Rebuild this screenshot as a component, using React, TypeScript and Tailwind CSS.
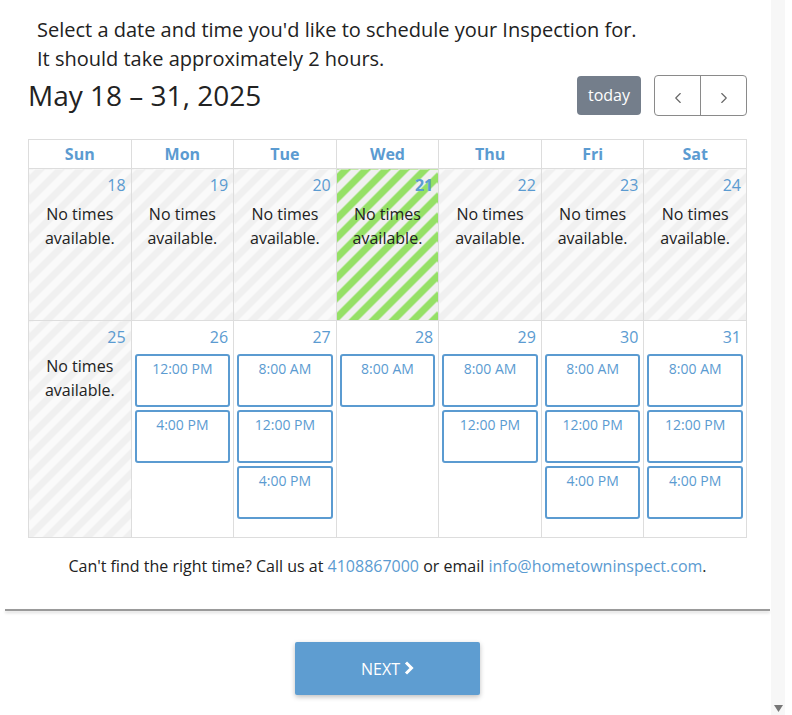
import { ChevronLeft, ChevronRight } from 'lucide-react'

type Day = { n: number; slots?: string[]; today?: boolean }

const days: string[] = ['Sun', 'Mon', 'Tue', 'Wed', 'Thu', 'Fri', 'Sat']

const weeks: Day[][] = [
  [{ n: 18 }, { n: 19 }, { n: 20 }, { n: 21, today: true }, { n: 22 }, { n: 23 }, { n: 24 }],
  [
    { n: 25 },
    { n: 26, slots: ['12:00 PM', '4:00 PM'] },
    { n: 27, slots: ['8:00 AM', '12:00 PM', '4:00 PM'] },
    { n: 28, slots: ['8:00 AM'] },
    { n: 29, slots: ['8:00 AM', '12:00 PM'] },
    { n: 30, slots: ['8:00 AM', '12:00 PM', '4:00 PM'] },
    { n: 31, slots: ['8:00 AM', '12:00 PM', '4:00 PM'] },
  ],
]

function DayCell({ day }: { day: Day }) {
  const striped = !day.slots
  let bg = 'bg-white'
  if (striped) bg = 'bg-[repeating-linear-gradient(-45deg,#f0f0f0_0,#f0f0f0_7px,#fafafa_7px,#fafafa_14px)]'
  if (day.today) bg = 'bg-[repeating-linear-gradient(-45deg,#95e066_0,#95e066_7px,#f0f0f0_7px,#f0f0f0_14px)]'

  return (
    <td className={`border border-[#dddddd] align-top p-0 ${bg}`}>
      <div className={`text-right pr-[5px] pt-[5px] text-[16px] leading-[22px] text-[#5b9bd1] ${day.today ? 'font-bold' : ''}`}>
        {day.n}
      </div>
      {striped ? (
        <div className="mt-[6px] text-center text-[16px] leading-[24px] text-[#222]">
          No times
          <br />
          available.
        </div>
      ) : (
        <div className="mt-[6px] flex flex-col gap-[3px] px-[3px]">
          {day.slots!.map((s) => (
            <div
              key={s}
              className="h-[53px] rounded-[3px] border-2 border-[#5b9bd1] pt-[3px] text-center text-[14px] leading-[20px] text-[#5b9bd1]"
            >
              {s}
            </div>
          ))}
        </div>
      )}
    </td>
  )
}

export default function App() {
  return (
    <div className="flex w-[792px] h-[715px] bg-white overflow-hidden font-['Open_Sans',sans-serif] text-[#222]">
      <div className="w-[771px] flex flex-col">
        <div className="pl-[37px] pt-[15px] text-[20px] leading-[29px] text-[#222]">
          <p>Select a date and time you'd like to schedule your Inspection for.</p>
          <p>It should take approximately 2 hours.</p>
        </div>

        <div className="pl-[28px] pr-[24px]">
          <div className="flex items-center justify-between h-[44px]">
            <h2 className="text-[28px] leading-[40px] text-[#222]">May 18 – 31, 2025</h2>
            <div className="flex items-center gap-[13px]">
              <button className="h-[39px] px-[11px] rounded-[4px] bg-[#747e8b] text-white text-[16px]">today</button>
              <div className="flex h-[41px] rounded-[4px] border border-[#8a8a8a]">
                <button className="w-[46px] flex items-center justify-center border-r border-[#8a8a8a] text-[#666]">
                  <ChevronLeft className="w-[18px] h-[18px] mt-[5px]" strokeWidth={1.5} />
                </button>
                <button className="w-[45px] flex items-center justify-center text-[#666]">
                  <ChevronRight className="w-[18px] h-[18px] mt-[5px]" strokeWidth={1.5} />
                </button>
              </div>
            </div>
          </div>

          <table className="mt-[22px] w-[719px] table-fixed border-collapse">
            <thead>
              <tr>
                {days.map((d) => (
                  <th
                    key={d}
                    className="h-[29px] border border-[#dddddd] text-center text-[16px] font-bold text-[#5b9bd1] p-0"
                  >
                    {d}
                  </th>
                ))}
              </tr>
            </thead>
            <tbody>
              {weeks.map((w, i) => (
                <tr key={i} className={i === 0 ? 'h-[152px]' : 'h-[217px]'}>
                  {w.map((d) => (
                    <DayCell key={d.n} day={d} />
                  ))}
                </tr>
              ))}
            </tbody>
          </table>

          <p className="mt-[16px] text-center text-[16px] text-[#222]">
            Can't find the right time? Call us at <span className="text-[#5b9bd1]">4108867000</span> or email{' '}
            <span className="text-[#5b9bd1]">info@hometowninspect.com</span>.
          </p>
        </div>

        <div className="mt-[31px] ml-[5px] w-[765px] h-[2px] bg-[#9a9a9a] shadow-[0_2px_3px_rgba(0,0,0,0.15)]" />

        <div className="flex justify-center mt-[31px] pl-[4px]">
          <button className="w-[185px] h-[53px] rounded-[2px] bg-[#5e9dd1] text-white text-[16px] shadow-[0_2px_5px_rgba(0,0,0,0.25)] flex items-center justify-center gap-[4px]">
            NEXT
            <svg width="10" height="14" viewBox="0 0 10 14" className="mt-[-1px]">
              <path d="M2 1.5 L7.5 7 L2 12.5" fill="none" stroke="white" strokeWidth="3" />
            </svg>
          </button>
        </div>
      </div>

      <div className="w-[14px] h-full bg-[#f7f7f7] flex flex-col justify-end items-center pb-[2px]">
        <svg width="9" height="8" viewBox="0 0 9 8">
          <path d="M0 0 H9 L4.5 7 Z" fill="#777" />
        </svg>
      </div>
    </div>
  )
}
